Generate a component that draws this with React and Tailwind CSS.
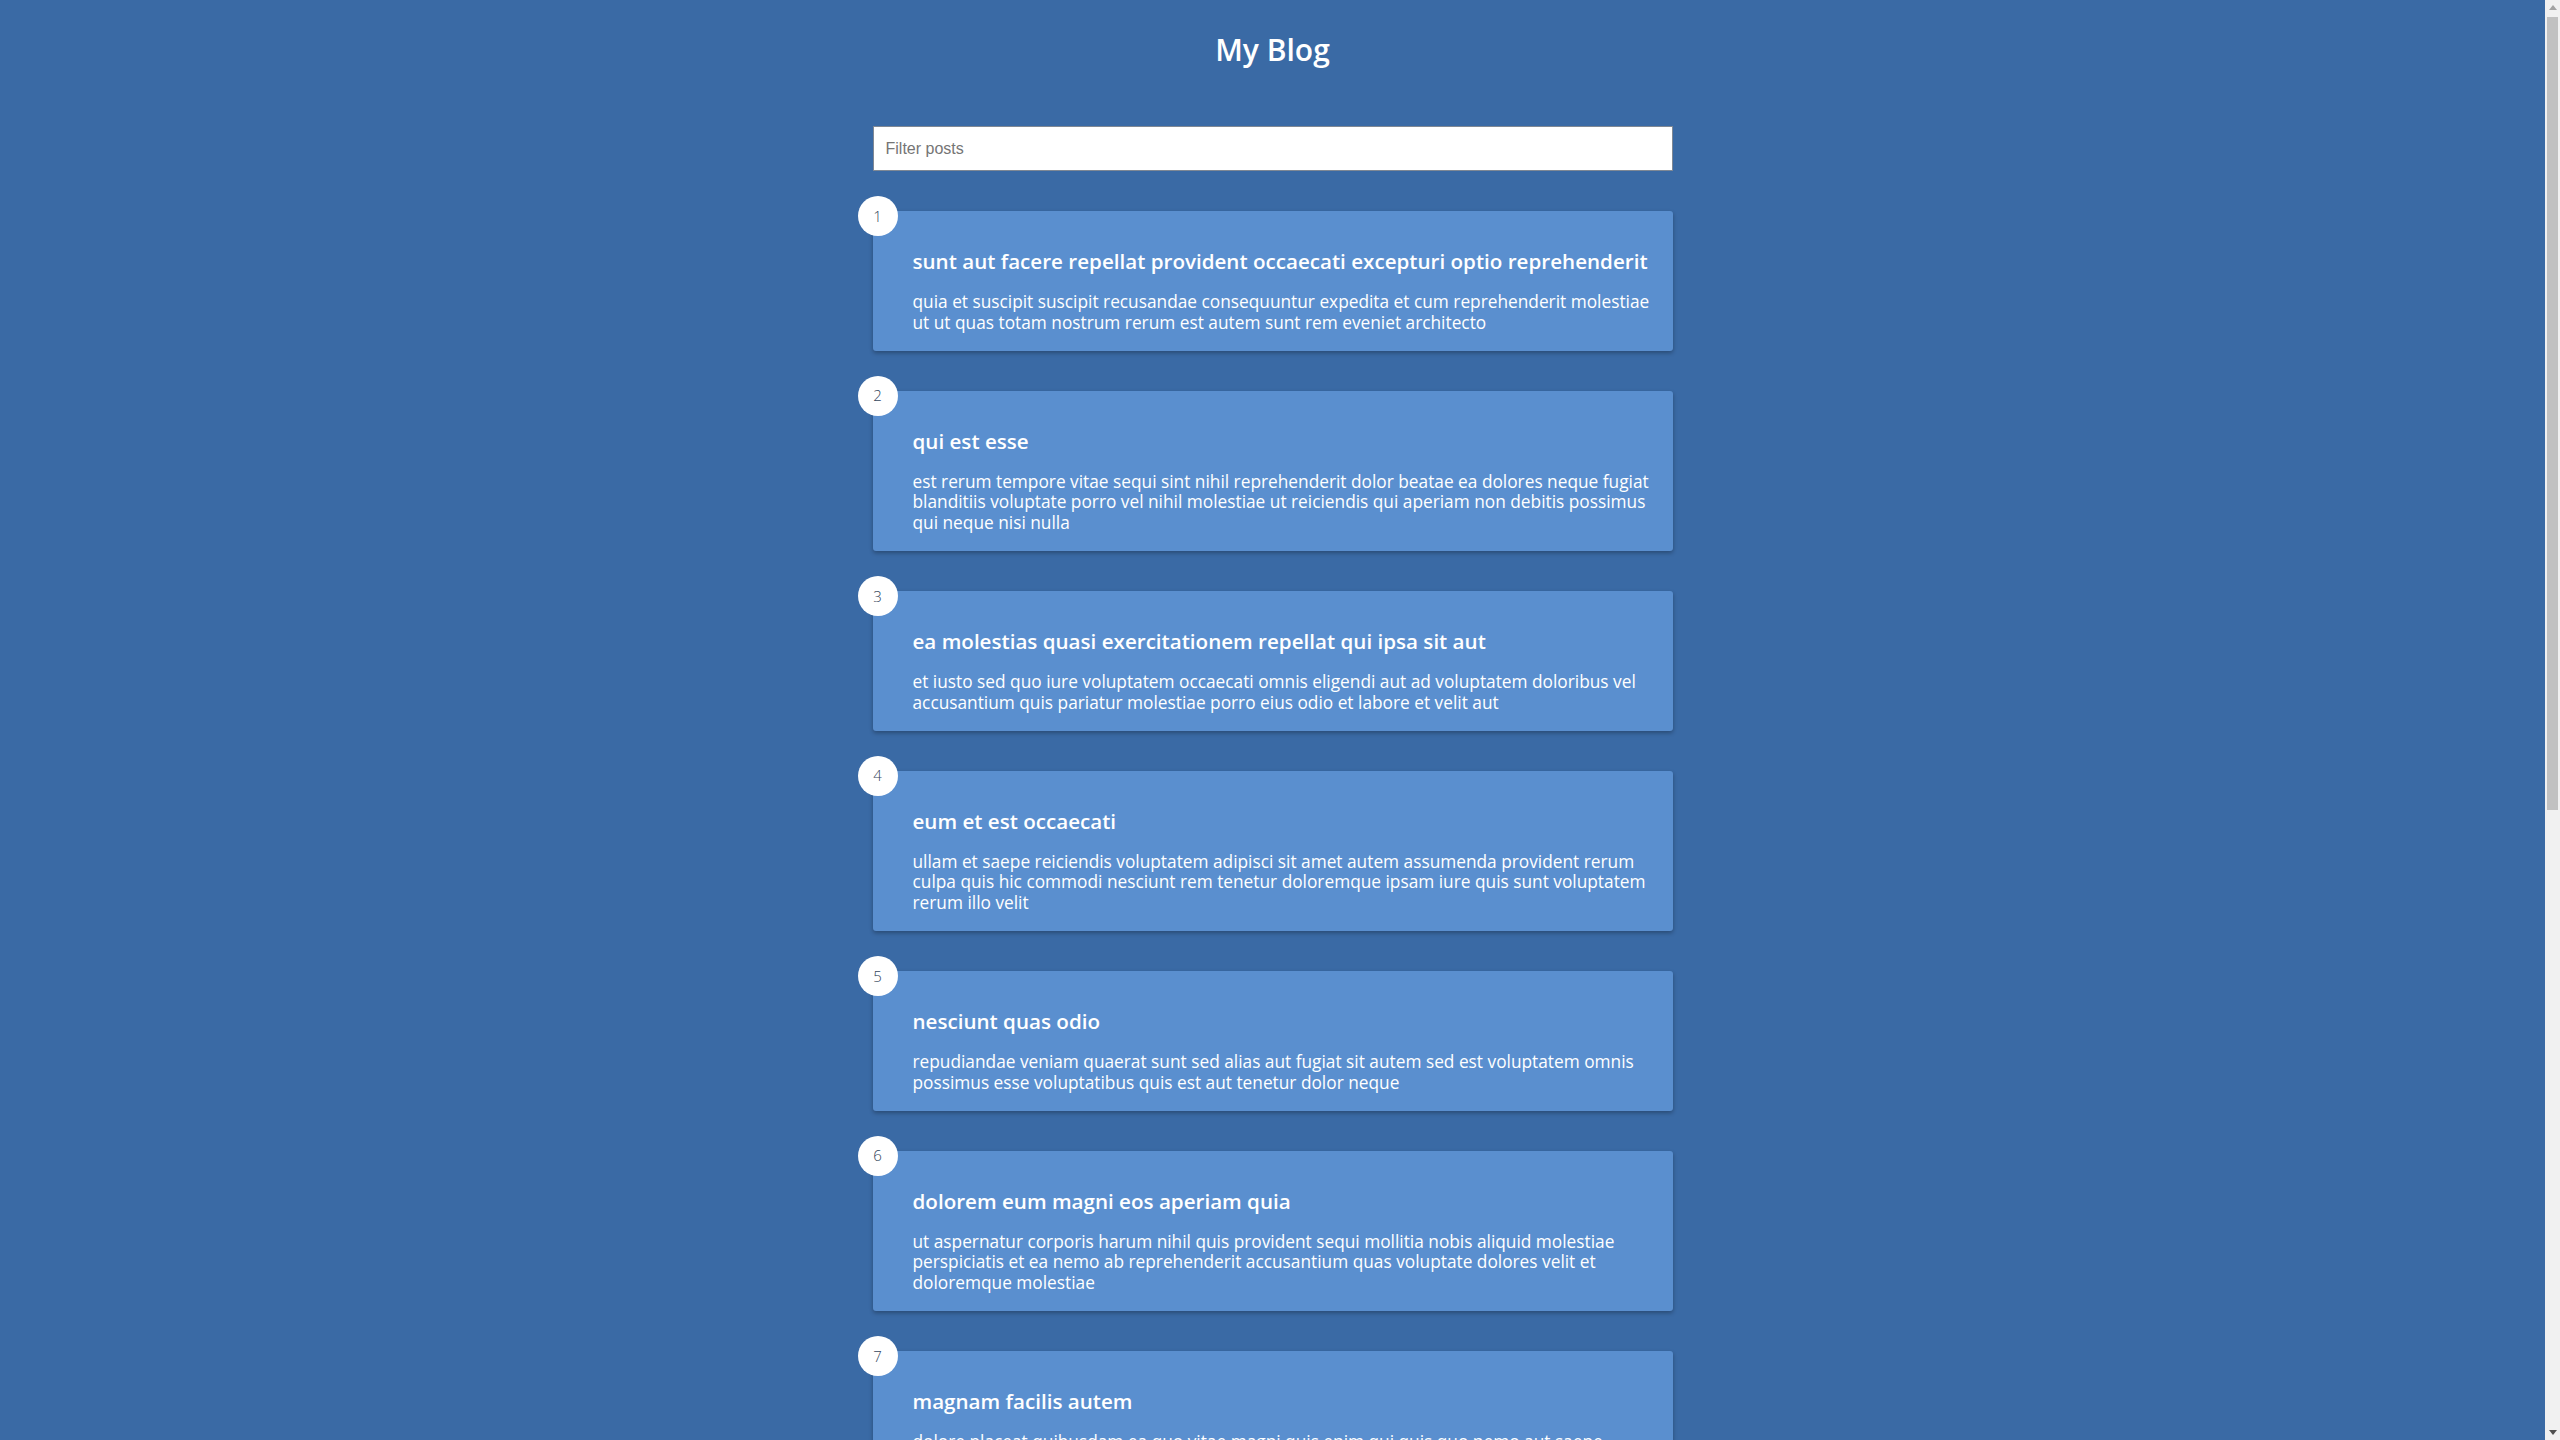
import React from "react";

const posts = [
  {
    id: 1,
    title: "sunt aut facere repellat provident occaecati excepturi optio reprehenderit",
    lines: [
      "quia et suscipit suscipit recusandae consequuntur expedita et cum reprehenderit molestiae",
      "ut ut quas totam nostrum rerum est autem sunt rem eveniet architecto",
    ],
  },
  {
    id: 2,
    title: "qui est esse",
    lines: [
      "est rerum tempore vitae sequi sint nihil reprehenderit dolor beatae ea dolores neque fugiat",
      "blanditiis voluptate porro vel nihil molestiae ut reiciendis qui aperiam non debitis possimus",
      "qui neque nisi nulla",
    ],
  },
  {
    id: 3,
    title: "ea molestias quasi exercitationem repellat qui ipsa sit aut",
    lines: [
      "et iusto sed quo iure voluptatem occaecati omnis eligendi aut ad voluptatem doloribus vel",
      "accusantium quis pariatur molestiae porro eius odio et labore et velit aut",
    ],
  },
  {
    id: 4,
    title: "eum et est occaecati",
    lines: [
      "ullam et saepe reiciendis voluptatem adipisci sit amet autem assumenda provident rerum",
      "culpa quis hic commodi nesciunt rem tenetur doloremque ipsam iure quis sunt voluptatem",
      "rerum illo velit",
    ],
  },
  {
    id: 5,
    title: "nesciunt quas odio",
    lines: [
      "repudiandae veniam quaerat sunt sed alias aut fugiat sit autem sed est voluptatem omnis",
      "possimus esse voluptatibus quis est aut tenetur dolor neque",
    ],
  },
  {
    id: 6,
    title: "dolorem eum magni eos aperiam quia",
    lines: [
      "ut aspernatur corporis harum nihil quis provident sequi mollitia nobis aliquid molestiae",
      "perspiciatis et ea nemo ab reprehenderit accusantium quas voluptate dolores velit et",
      "doloremque molestiae",
    ],
  },
  {
    id: 7,
    title: "magnam facilis autem",
    lines: [
      "dolore placeat quibusdam ea quo vitae magni quis enim qui quis quo nemo aut saepe",
      "quidem repellat excepturi ut quia sunt ut sequi eos ea sed quas",
    ],
  },
  {
    id: 8,
    title: "dolorem dolore est ipsam",
    lines: [
      "dignissimos aperiam dolorem qui eum facilis quibusdam animi sint suscipit qui sint possimus",
      "cum quaerat magni maiores excepturi ipsam ut commodi dolor voluptatum modi aut vitae",
    ],
  },
];

function Post({ post }) {
  return (
    <div className="relative mt-[40px] flex w-[800px] shrink-0 rounded-[3px] bg-[#5a8fcf] pl-[40px] pr-[20px] pt-[36px] pb-[17px] shadow-[0_2px_4px_rgba(0,0,0,0.3)]">
      <div className="absolute left-[-15px] top-[-15px] flex h-[40px] w-[40px] items-center justify-center rounded-full bg-white font-['Open_Sans',sans-serif] text-[15px] font-light text-[#34465c]">
        {post.id}
      </div>
      <div className="flex flex-col">
        <h2 className="m-0 whitespace-nowrap font-['Open_Sans',sans-serif] text-[20.6px] font-semibold leading-[28px] text-white">
          {post.title}
        </h2>
        <p className="mt-[17px] font-['Open_Sans',sans-serif] text-[17.3px] leading-[20.8px] text-white">
          {post.lines.map((l, i) => (
            <span key={i} className="block whitespace-nowrap">
              {l}
            </span>
          ))}
        </p>
      </div>
    </div>
  );
}

function Scrollbar() {
  return (
    <div className="flex h-full w-[15px] shrink-0 flex-col bg-[#f1f1f1]">
      <div className="flex h-[15px] items-center justify-center">
        <svg width="8" height="5" viewBox="0 0 8 5">
          <polygon points="4,0 8,5 0,5" fill="#a3a3a3" />
        </svg>
      </div>
      <div className="flex-1 px-[2px] pt-[2px]">
        <div className="h-[793px] w-full bg-[#c1c1c1]" />
      </div>
      <div className="flex h-[15px] items-center justify-center">
        <svg width="8" height="5" viewBox="0 0 8 5">
          <polygon points="0,0 8,0 4,5" fill="#505050" />
        </svg>
      </div>
    </div>
  );
}

export default function App() {
  return (
    <div className="flex h-screen w-full overflow-hidden bg-[#3a6aa5]">
      <div className="flex min-w-0 flex-1 flex-col items-center overflow-hidden pt-[30px] text-white">
        <h1 className="m-0 text-center font-['Open_Sans',sans-serif] text-[30px] font-semibold leading-[40px] text-white">
          My Blog
        </h1>
        <div className="mt-[56px] w-[800px] shrink-0">
          <input
            type="text"
            placeholder="Filter posts"
            className="block h-[45px] w-full border border-[#7f8894] bg-white px-[12px] font-['Liberation_Sans',Arial,sans-serif] text-[16px] text-[#333] placeholder:text-[#757575] outline-none"
          />
        </div>
        {posts.map((p) => (
          <Post key={p.id} post={p} />
        ))}
      </div>
      <Scrollbar />
    </div>
  );
}
